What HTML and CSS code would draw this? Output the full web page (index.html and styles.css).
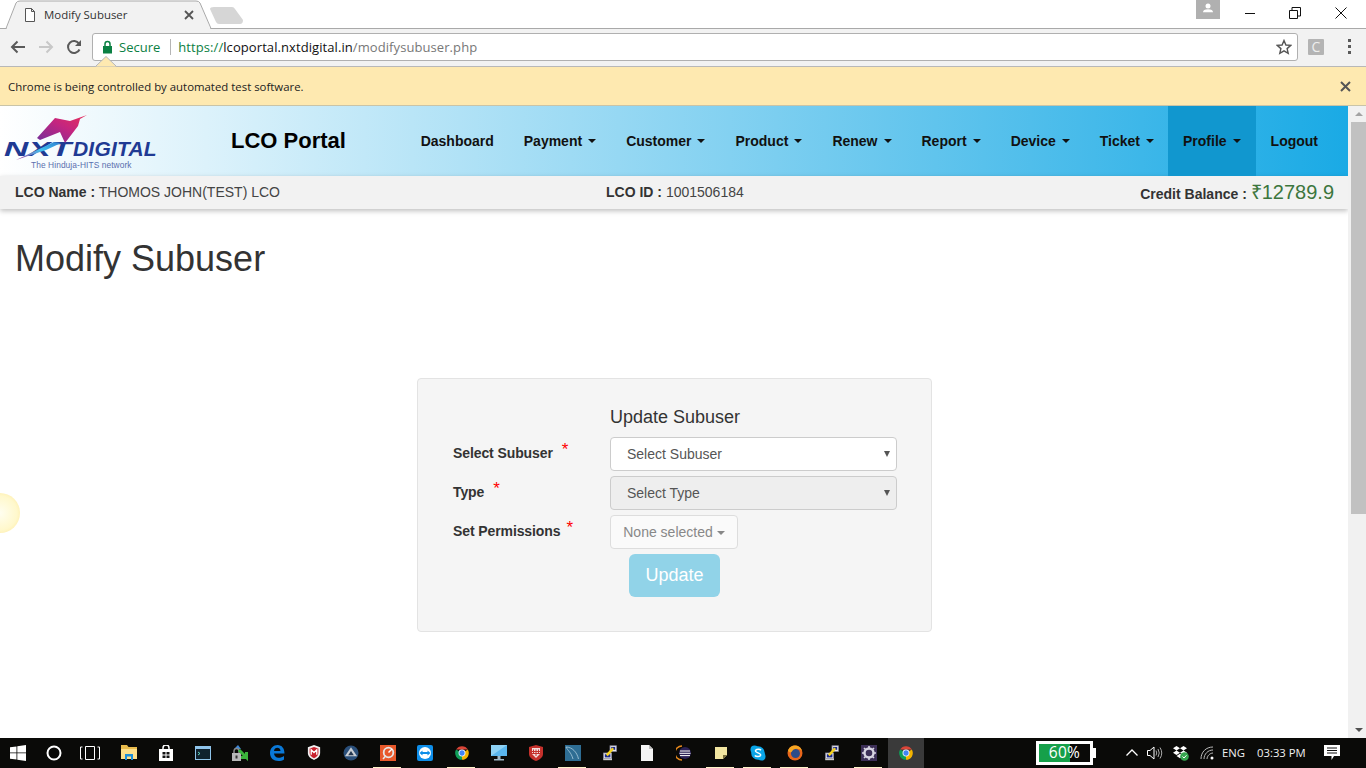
FILE: index.html
```html
<!DOCTYPE html>
<html lang="en">
<head>
<meta charset="utf-8">
<title>Modify Subuser</title>
<link rel="stylesheet" href="styles.css">
</head>
<body>
<svg class="defs" width="0" height="0" aria-hidden="true">
  <symbol id="chrome" viewBox="0 0 20 20">
    <path fill="#db4437" d="M2.6 5.75A8.5 8.5 0 0 1 17.36 5.75L10 5.75Z"/>
    <path fill="#f4b400" d="M17.36 5.75A8.5 8.5 0 0 1 10 18.5L10 10Z"/>
    <path fill="#0f9d58" d="M10 18.5A8.5 8.5 0 0 1 2.6 5.75L10 10Z"/>
    <circle cx="10" cy="10" r="4.3" fill="#fff"/>
    <circle cx="10" cy="10" r="3.3" fill="#4285f4"/>
  </symbol>
  <symbol id="putty" viewBox="0 0 20 20">
    <rect x="2" y="10" width="10" height="7" fill="#e8e8f0" stroke="#889" stroke-width="1"/>
    <rect x="3.5" y="11.5" width="7" height="4" fill="#1b2a8a"/>
    <rect x="1.5" y="17" width="11" height="2" fill="#ccc"/>
    <rect x="10" y="1" width="8" height="7" fill="#e8e8f0" stroke="#889"/>
    <rect x="11.5" y="2.500" width="5" height="3.500" fill="#1b2a8a"/>
    <path d="M6 13 14 4" stroke="#f6d21f" stroke-width="3"/>
  </symbol>
</svg>

<header class="tabstrip">
  <svg class="tabshape" width="250" height="30" viewBox="0 0 250 30" aria-hidden="true">
    <path d="M6 30 16 3Q17 1 20 1H196Q199 1 200 3L211 30Z" fill="#f2f2f2"/>
    <path d="M0 28.500H6L16 3Q17 1 20 1H196Q199 1 200 3L211 28.500" fill="none" stroke="#a9a9a9"/>
    <path d="M214 7H232Q234 7 235 9L243 20Q243 24 240 24H219Q217 24 216 22L210 9Q210 7 214 7Z" fill="#d6d6d6"/>
  </svg>
  <div class="tab">
    <svg class="tabicon" width="12" height="14" viewBox="0 0 12 14" aria-hidden="true"><path d="M1.5.5H7.5L10.5 3.5V13.5H1.5ZM7.5.5V3.5H10.5" fill="#fff" stroke="#555"/></svg>
    <span class="tabtitle">Modify Subuser</span>
    <svg class="tabclose" width="10" height="10" viewBox="0 0 10 10" aria-hidden="true"><path d="M1 1 9 9M9 1 1 9" stroke="#555" stroke-width="1.8"/></svg>
  </div>
  <div class="wincontrols">
    <div class="avatar"><svg width="12" height="10" viewBox="0 0 14 12" aria-hidden="true"><circle cx="7" cy="3.5" r="3" fill="#fff"/><path d="M1 11Q1 7.5 7 7.5T13 11Z" fill="#fff"/></svg></div>
    <div class="winbtn"><svg width="12" height="12" viewBox="0 0 12 12" aria-hidden="true"><path d="M2 6.500H12" stroke="#111"/></svg></div>
    <div class="winbtn"><svg width="12" height="12" viewBox="0 0 12 12" aria-hidden="true"><path d="M.5 3.500H8.500V11.500H.5ZM3 3.500V.5H11.500V9H8.500" fill="none" stroke="#111"/></svg></div>
    <div class="winbtn"><svg width="12" height="12" viewBox="0 0 12 12" aria-hidden="true"><path d="M.5.5 11.500 11.500M11.500.5 .5 11.500" stroke="#111"/></svg></div>
  </div>
</header>

<div class="toolbar">
  <svg class="navicon first" width="16" height="14" viewBox="0 0 16 14" aria-hidden="true"><path d="M15 7H2M7.500 1.500 2 7l5.500 5.500" fill="none" stroke="#5a5a5a" stroke-width="2"/></svg>
  <svg class="navicon" width="16" height="14" viewBox="0 0 16 14" aria-hidden="true"><path d="M1 7H14M8.500 1.500 14 7l-5.500 5.500" fill="none" stroke="#c8c8c8" stroke-width="2"/></svg>
  <svg class="navicon" width="16" height="16" viewBox="0 0 16 16" aria-hidden="true"><path d="M13.500 10.500A6 6 0 1 1 13 4.600" fill="none" stroke="#5a5a5a" stroke-width="2"/><path d="M15 1V7H9Z" fill="#5a5a5a"/></svg>
  <div class="omnibox">
    <svg class="lock" width="11" height="14" viewBox="0 0 11 14" aria-hidden="true"><path d="M3 6V4a2.500 2.500 0 0 1 5 0V6" fill="none" stroke="#0b8043" stroke-width="1.500"/><rect x="1" y="6" width="9" height="7.500" fill="#0b8043"/></svg>
    <span class="secure">Secure</span>
    <span class="omnisep"></span>
    <span class="url"><span class="scheme">https://</span>lcoportal.nxtdigital.in<span class="path">/modifysubuser.php</span></span>
    <svg class="star" width="16" height="16" viewBox="0 0 16 16" aria-hidden="true"><path d="M8 1.500 9.900 6 14.800 6.400 11.100 9.600 12.200 14.400 8 11.900 3.800 14.400 4.900 9.600 1.200 6.400 6.100 6Z" fill="none" stroke="#555" stroke-width="1.400"/></svg>
  </div>
  <span class="extension">C</span>
  <span class="menu"><i></i><i></i><i></i></span>
</div>

<div class="infobar">
  <svg class="notch" width="22" height="11" viewBox="0 0 22 11" aria-hidden="true"><path d="M1 10.500 11 .5 21 10.500Z" fill="#fee9b0"/><path d="M1 10 11 .5 21 10" fill="none" stroke="#b5b5b5"/></svg>
  <span class="infotext">Chrome is being controlled by automated test software.</span>
  <svg width="11" height="11" viewBox="0 0 11 11" aria-hidden="true"><path d="M1 1 10 10M10 1 1 10" stroke="#555" stroke-width="2"/></svg>
</div>

<div class="viewport">
  <main class="page">
    <nav class="navbar">
      <div class="brand">
        <span class="nxt">NXT</span><span class="digital">DIGITAL</span>
        <span class="tagline">The Hinduja-HITS network</span>
        <svg class="swoosh" width="90" height="62" viewBox="0 0 90 62" aria-hidden="true">
          <defs>
            <linearGradient id="wing" x1="0" y1="1" x2="1" y2="0"><stop offset="0" stop-color="#6f2f9c"/><stop offset=".55" stop-color="#c32580"/><stop offset="1" stop-color="#e8305a"/></linearGradient>
            <linearGradient id="tail" x1="0" y1="1" x2="1" y2="0"><stop offset="0" stop-color="#b03a9a"/><stop offset=".55" stop-color="#3fc0ee"/><stop offset="1" stop-color="#2f7fd0"/></linearGradient>
          </defs>
          <path d="M33 26 51 6 66 9 83 3 76 7 74 14 61 31 56 20 36 28Z" fill="url(#wing)"/>
          <path d="M12 48 50 30 57 31 42 38Z" fill="url(#tail)"/>
        </svg>
      </div>
      <span class="portal">LCO Portal</span>
      <ul class="menu-list">
        <li class="item">Dashboard</li>
        <li class="item">Payment<b class="caret"></b></li>
        <li class="item">Customer<b class="caret"></b></li>
        <li class="item">Product<b class="caret"></b></li>
        <li class="item">Renew<b class="caret"></b></li>
        <li class="item">Report<b class="caret"></b></li>
        <li class="item">Device<b class="caret"></b></li>
        <li class="item tight">Ticket<b class="caret"></b></li>
        <li class="item active">Profile<b class="caret"></b></li>
        <li class="item">Logout</li>
      </ul>
    </nav>
    <div class="subbar">
      <span class="sub-name"><b>LCO Name :</b> THOMOS JOHN(TEST) LCO</span>
      <span class="sub-id"><b>LCO ID :</b> 1001506184</span>
      <span class="sub-credit"><b>Credit Balance :</b> <span class="amount">₹12789.9</span></span>
    </div>
    <h1 class="title">Modify Subuser</h1>
    <form class="panel">
      <h4 class="panel-title">Update Subuser</h4>
      <label class="field-label">Select Subuser<sup class="req">*</sup></label>
      <div class="select-wrap"><select class="control"><option>Select Subuser</option></select></div>
      <label class="field-label">Type<sup class="req">*</sup></label>
      <div class="select-wrap"><select class="control" disabled><option>Select Type</option></select></div>
      <label class="field-label">Set Permissions<sup class="req tight">*</sup></label>
      <div><button type="button" class="multi">None selected<b class="caret"></b></button></div>
      <div class="actions"><button type="button" class="update">Update</button></div>
    </form>
  </main>
  <aside class="scrollbar">
    <span class="arrow-up"></span>
    <span class="thumb"></span>
    <span class="arrow-down"></span>
  </aside>
  <span class="highlight"></span>
</div>

<footer class="taskbar">
  <div class="tb-item narrow"><svg width="16" height="16" viewBox="0 0 16 16" aria-hidden="true"><path fill="#fff" d="M0 2.300 6.500 1.400V7.500H0ZM7.300 1.300 16 0V7.500H7.300ZM0 8.300H6.500V14.600L0 13.700ZM7.300 8.300H16V16L7.300 14.700Z"/></svg></div>
  <div class="tb-item narrow"><svg width="16" height="16" viewBox="0 0 16 16" aria-hidden="true"><circle cx="8" cy="8" r="6.500" fill="none" stroke="#fff" stroke-width="2"/></svg></div>
  <div class="tb-item narrow"><svg width="20" height="14" viewBox="0 0 20 14" aria-hidden="true"><path d="M5.500.5H14.500V13.500H5.500ZM2.500 1H.5V13H2.500M17.500 1H19.500V13H17.500" fill="none" stroke="#fff"/></svg></div>
  <div class="tb-item folder"><svg width="16" height="15" viewBox="0 0 16 15" aria-hidden="true"><path d="M0 0H6L7.500 2H16V14H0Z" fill="#e8bb4c"/><path d="M0 4H16V14H0Z" fill="#fde08a"/><path d="M4 9H12V15H10V11.500H6V15H4Z" fill="#1e8fd8"/></svg></div>
  <div class="tb-item"><svg width="14" height="16" viewBox="0 0 14 16" aria-hidden="true"><path d="M0 4H14V16H0Z" fill="#fff"/><path d="M4 4V3A3 3 0 0 1 10 3V4" fill="none" stroke="#fff" stroke-width="1.500"/><path d="M3.500 7H6.500V9.500H3.500ZM7.500 7H10.500V9.500H7.500ZM3.500 10.500H6.500V13H3.500ZM7.500 10.500H10.500V13H7.500Z" fill="#111"/></svg></div>
  <div class="tb-item"><svg width="16" height="14" viewBox="0 0 16 14" aria-hidden="true"><rect width="16" height="14" fill="#8fc4ea"/><rect x="1" y="3" width="14" height="10" fill="#10222e"/><path d="M3 6 5 7.500 3 9" fill="none" stroke="#7fd" stroke-width=".8"/></svg></div>
  <div class="tb-item"><svg width="16" height="16" viewBox="0 0 16 16" aria-hidden="true"><path d="M2 4 6 0 9 4Z" fill="#3f87d6"/><rect x="0" y="8" width="9" height="8" fill="#b8b8b8"/><path d="M2 8V6A2.500 2.500 0 0 1 7 6V8" fill="none" stroke="#8a8a8a" stroke-width="1.500"/><rect x="3.500" y="10.500" width="2" height="3" fill="#333"/><path d="M7 5 14.500 12.500V7M14.500 12.500H9" fill="none" stroke="#3bb43b" stroke-width="3"/></svg></div>
  <div class="tb-item"><svg width="16" height="16" viewBox="0 0 16 16" aria-hidden="true"><path d="M1 8C1 3 4.500 0 8.500 0 13 0 15.500 3.500 15.500 8.500H5C5.300 11 7 12.800 9.500 12.800 11.500 12.800 13.500 12 15 11V14.500C13.500 15.500 11.500 16 9.500 16 4.500 16 1 13 1 8ZM5 6H11.500C11.300 4 10 2.800 8.300 2.800 6.600 2.800 5.300 4 5 6Z" fill="#0a78d6"/></svg></div>
  <div class="tb-item"><svg width="14" height="15" viewBox="0 0 16 17" aria-hidden="true"><path d="M1 2.500 8 0 15 2.500V9C15 13 12 15 8 17 4 15 1 13 1 9Z" fill="#f2f2f2"/><path d="M3 4 8 2.200 13 4V9C13 11.800 11 13.500 8 15 5 13.500 3 11.800 3 9Z" fill="#c8202c"/><path d="M4.800 11V5.500L8 8.500 11.200 5.500V11" fill="none" stroke="#fff" stroke-width="1.500"/></svg></div>
  <div class="tb-item"><svg width="16" height="16" viewBox="0 0 17 17" aria-hidden="true"><circle cx="8.500" cy="8.500" r="8" fill="#2a4f7a"/><path d="M8.500 2.500 15 12H2Z" fill="#c9ced4"/><path d="M8.500 6.500 11.500 11H5.500Z" fill="#23364f"/></svg></div>
  <div class="tb-item run"><svg width="16" height="16" viewBox="0 0 16 16" aria-hidden="true"><rect width="16" height="16" fill="#e8592b"/><circle cx="8.500" cy="7.500" r="4.800" fill="none" stroke="#e6e6e6" stroke-width="1.800"/><path d="M8.500 7.500 12 4" stroke="#fff" stroke-width="1.500"/><path d="M3 14 6 10.500" stroke="#e6e6e6" stroke-width="1.500"/></svg></div>
  <div class="tb-item"><svg width="16" height="16" viewBox="0 0 16 16" aria-hidden="true"><rect width="16" height="16" rx="2" fill="#0e8ee9"/><circle cx="8" cy="8" r="6" fill="#fff"/><path d="M2.500 8 5.500 5.500V7H10.500V5.500L13.500 8 10.500 10.500V9H5.500V10.500Z" fill="#0e8ee9"/></svg></div>
  <div class="tb-item run"><svg width="16" height="16" aria-hidden="true"><use href="#chrome"/></svg></div>
  <div class="tb-item"><svg width="16" height="16" viewBox="0 0 16 16" aria-hidden="true"><rect y="0" width="16" height="11" fill="#5ab6ee"/><path d="M0 0H16L0 11Z" fill="#8ed2f5"/><rect x="6.500" y="11" width="3" height="3" fill="#9fb8c8"/><rect x="3" y="14" width="10" height="1.500" fill="#9fb8c8"/></svg></div>
  <div class="tb-item"><svg width="14" height="16" viewBox="0 0 14 16" aria-hidden="true"><path d="M0 2 7 0 14 2V9C14 12 11 14.500 7 16 3 14.500 0 12 0 9Z" fill="#c5312c"/><path d="M3 3H11V9L7 13 3 9Z" fill="#f3dcdc"/><path d="M4.500 4.500V9M7 4.500V11M9.500 4.500V9M3 6.500H11M3 8.500H11" stroke="#c5312c"/></svg></div>
  <div class="tb-item run"><svg width="16" height="16" viewBox="0 0 16 16" aria-hidden="true"><rect width="16" height="16" fill="#2e6d93"/><path d="M1 2C7 2 12 7 13.500 14M1 2C3 6 6 7 8 14" fill="none" stroke="#9ec2d6" stroke-width=".9"/></svg></div>
  <div class="tb-item"><svg width="16" height="16" aria-hidden="true"><use href="#putty"/></svg></div>
  <div class="tb-item"><svg width="12" height="16" viewBox="0 0 12 16" aria-hidden="true"><path d="M0 0H8L12 4V16H0Z" fill="#f4f4f4"/><path d="M8 0V4H12Z" fill="#bcbcbc"/></svg></div>
  <div class="tb-item"><svg width="16" height="16" viewBox="0 0 16 16" aria-hidden="true"><path d="M6 1A7 7 0 0 0 6 15" fill="none" stroke="#e8891c" stroke-width="1.500"/><circle cx="9" cy="8" r="6" fill="#2c2255"/><path d="M4 6H14M3.500 8.300H14.500M4 10.600H14" stroke="#fff"/></svg></div>
  <div class="tb-item run"><svg width="12" height="12" viewBox="0 0 12 12" aria-hidden="true"><path d="M0 0H12V8L8 12H0Z" fill="#f2e5a0"/><path d="M12 8H8V12Z" fill="#7a6e3a"/></svg></div>
  <div class="tb-item run"><svg width="16" height="16" viewBox="0 0 16 16" aria-hidden="true"><circle cx="4.500" cy="4.500" r="4" fill="#0aa5e8"/><circle cx="11.500" cy="11.500" r="4" fill="#0aa5e8"/><circle cx="8" cy="8" r="6.800" fill="#0aa5e8"/><path d="M11 5.200C10 4 6 3.800 5.500 5.800 5 8 11 7.800 10.700 10.200 10.300 12 6 12 4.800 10.500" fill="none" stroke="#fff" stroke-width="1.500"/></svg></div>
  <div class="tb-item run"><svg width="16" height="16" viewBox="0 0 16 16" aria-hidden="true"><circle cx="8" cy="8" r="7.500" fill="#e8661b"/><circle cx="8.500" cy="8.500" r="4.500" fill="#2c4c8a"/><path d="M1 6C2 2 5 .5 8 .5 11 .5 14 2 15 6 13 3.500 9 3 6.500 4.500 5 6 5 7 3 7.500Z" fill="#f6a623"/></svg></div>
  <div class="tb-item"><svg width="16" height="16" aria-hidden="true"><use href="#putty"/></svg></div>
  <div class="tb-item run"><svg width="16" height="16" viewBox="0 0 16 16" aria-hidden="true"><rect width="16" height="16" fill="#3c2f57"/><circle cx="8" cy="8" r="4.500" fill="none" stroke="#d9d6e3" stroke-width="2.400"/><path d="M8 1V3.500M8 12.500V15M1 8H3.500M12.500 8H15M3 3 4.800 4.800M13 13 11.200 11.200M3 13 4.800 11.200M13 3 11.200 4.800" stroke="#d9d6e3" stroke-width="1.600"/></svg></div>
  <div class="tb-item active-app"><svg width="16" height="16" aria-hidden="true"><use href="#chrome"/></svg></div>
  <div class="battery"><span class="battery-fill"></span><span class="battery-text">60%</span></div>
  <span class="battery-tip"></span>
  <div class="tray">
    <svg width="12" height="7" viewBox="0 0 12 7" aria-hidden="true"><path d="M.5 6.500 6 1l5.500 5.500" fill="none" stroke="#fff" stroke-width="1.300"/></svg>
    <svg class="speaker" width="16" height="14" viewBox="0 0 16 14" aria-hidden="true"><path d="M.5 4.500H3L7 1V13L3 9.500H.5Z" fill="none" stroke="#fff"/><path d="M9 4.500Q10.500 7 9 9.500M11 3Q13.500 7 11 11M13 1.500Q16.500 7 13 12.500" fill="none" stroke="#aaa"/></svg>
    <svg class="dropbox" width="16" height="16" viewBox="0 0 16 16" aria-hidden="true"><path d="M3.500 1 7 3.200 3.500 5.500 0 3.200ZM10.500 1 14 3.200 10.500 5.500 7 3.200ZM3.500 5.500 7 7.800 3.500 10 0 7.800ZM10.500 5.500 14 7.800 10.500 10 7 7.800ZM3.500 11 7 8.800 10.500 11 7 13.200Z" fill="#fff"/><circle cx="11.500" cy="11.500" r="4.300" fill="#36a64f"/><path d="M9.500 11.500 11 13 13.500 10.300" fill="none" stroke="#fff"/></svg>
    <svg class="wifi" width="15" height="14" viewBox="0 0 15 14" aria-hidden="true"><path d="M1 13C1 6 6 1 13 1M4 13C4 8 8 4 13 4M7 13C7 10 10 7 13 7" fill="none" stroke="#bbb"/><circle cx="12" cy="12" r="1.500" fill="#fff"/></svg>
    <span class="lang">ENG</span>
    <span class="clock">03:33 PM</span>
    <svg class="notify" width="16" height="15" viewBox="0 0 16 15" aria-hidden="true"><path d="M0 0H16V11H10L7.500 15 7.500 11H0Z" fill="#fff"/><path d="M3 3H13M3 5.500H13M3 8H13" stroke="#111"/></svg>
  </div>
</footer>
</body>
</html>
```
FILE: styles.css
```css
* { box-sizing: border-box; }
html, body { margin: 0; padding: 0; }
body {
  width: 1366px; height: 768px; overflow: hidden;
  display: flex; flex-direction: column;
  font-family: "Liberation Sans", Arial, sans-serif;
  font-size: 14px; color: #333; background: #fff;
  position: relative;
}
.defs { position: absolute; }

/* browser tab strip */
.tabstrip { height: 29px; position: relative; display: flex; justify-content: space-between; background: #fff; flex: none; border-bottom: 1px solid #a9a9a9; }
.tabshape { position: absolute; left: 0; top: 0; }
.tab { position: relative; display: flex; align-items: center; width: 194px; height: 29px; padding-left: 24px; }
.tabicon { flex: none; margin-right: 8px; }
.tabtitle { font: 11.45px "Open Sans", sans-serif; color: #333; flex: 1; }
.tabclose { flex: none; }
.wincontrols { display: flex; position: relative; align-items: flex-start; padding-right: 2px; }
.avatar { width: 24px; height: 19px; background: #b0b0b0; display: flex; justify-content: center; align-items: flex-start; padding-top: 3px; margin-right: 6px; }
.winbtn { width: 46px; height: 26px; display: flex; align-items: center; justify-content: center; }

/* toolbar */
.toolbar { height: 37px; background: #f2f2f2; display: flex; align-items: center; flex: none; position: relative; padding-bottom: 2px; }
.navicon { margin-right: 12px; flex: none; }
.navicon.first { margin-left: 10px; }
.omnibox { width: 1206px; height: 28px; margin-left: -2px; background: #fff; border: 1px solid #b0b0b0; border-radius: 3px; display: flex; align-items: center; padding-left: 9px; padding-right: 5px; flex: none; }
.lock { flex: none; margin-right: 6px; }
.secure { font: 13px "Open Sans", sans-serif; color: #0b8043; }
.omnisep { width: 1px; height: 16px; background: #b5b5b5; margin: 0 7px 0 10px; }
.url { font: 13px "Open Sans", sans-serif; color: #111; flex: 1; letter-spacing: .08px; }
.scheme { color: #0b8043; }
.path { color: #777; }
.extension { width: 16px; height: 16px; margin-left: 10px; background: #b4b4b4; color: #eee; border-radius: 1px; font: 14px "Open Sans", sans-serif; text-align: center; line-height: 16px; flex: none; }
.menu { display: flex; flex-direction: column; gap: 3px; margin-left: 24px; }
.menu i { width: 3px; height: 3px; background: #5a5a5a; display: block; }

/* infobar */
.infobar { height: 40px; background: #fee9b0; border-top: 1px solid #b8b8b8; border-bottom: 1px solid #c9c4a8; display: flex; justify-content: space-between; align-items: center; padding: 0 15px 0 8px; flex: none; position: relative; }
.notch { position: absolute; left: 95px; top: -11px; }
.infotext { font: 11.4px "Open Sans", sans-serif; color: #222; }

/* page */
.viewport { flex: 1; display: flex; min-height: 0; position: relative; overflow: hidden; }
.page { flex: 1; min-width: 0; }
.navbar { height: 70px; display: flex; align-items: center; background: linear-gradient(90deg, #fff 0%, #1aaae5 100%); padding-right: 15px; }
.brand { position: relative; width: 231px; height: 70px; flex: none; }
.swoosh { position: absolute; left: 4px; top: 6px; }
.nxt { position: absolute; left: 4px; top: 31px; font: italic bold 21px "Liberation Sans", sans-serif; color: #1f3a93; transform: scaleX(1.6); transform-origin: left; }
.digital { position: absolute; left: 73px; top: 31px; font: italic bold 21px "Liberation Sans", sans-serif; color: #1f3a93; letter-spacing: .2px; }
.tagline { position: absolute; left: 31px; top: 54px; font: 8.4px "Liberation Sans", sans-serif; color: #5a6fae; letter-spacing: .08px; }
.portal { font-size: 22px; font-weight: bold; color: #000; flex: none; }
.menu-list { list-style: none; margin: 0 0 0 auto; padding: 0; display: flex; height: 70px; }
.item { display: flex; align-items: center; padding: 0 15px; font-weight: bold; color: #111; }
.item.tight { padding-right: 14px; }
.item.active { background: #1197cf; }
.caret { display: inline-block; width: 0; height: 0; margin-left: 6px; border-top: 4px solid #111; border-left: 4px solid transparent; border-right: 4px solid transparent; }
.subbar { height: 33px; background: #f2f2f2; color: #444; box-shadow: 0 2px 5px rgba(0,0,0,.25); display: flex; align-items: center; padding: 0 14px 2px 15px; }
.subbar b { color: #333; }
.sub-name { width: 591px; }
.sub-id { flex: 1; }
.amount { font-size: 20px; color: #3c763d; }
.title { font-size: 36px; font-weight: 500; color: #333; line-height: 40px; margin: 30px 0 99px 15px; }

/* form */
.panel { width: 515px; height: 254px; margin: 0 0 0 417px; background: #f5f5f5; border: 1px solid #e3e3e3; border-radius: 4px; padding: 24px 35px 0; display: grid; grid-template-columns: 157px 287px; grid-auto-rows: min-content; row-gap: 5px; align-content: start; }
.panel-title { grid-column: 2; margin: 0 0 1px; font-size: 18px; font-weight: 500; line-height: 28px; color: #333; }
.field-label { font-weight: bold; color: #333; height: 34px; display: flex; align-items: center; padding-bottom: 2px; letter-spacing: -.1px; }
.req { color: red; font-weight: normal; font-size: 17px; margin-left: 9px; position: relative; top: -3px; }
.req.tight { margin-left: 6px; }
.select-wrap { position: relative; height: 34px; }
.select-wrap::after { content: ""; position: absolute; right: 7px; top: 14px; width: 0; height: 0; border-top: 6px solid #555; border-left: 3px solid transparent; border-right: 3px solid transparent; pointer-events: none; }
.control { appearance: none; display: block; width: 287px; height: 34px; font: 14px "Liberation Sans", sans-serif; color: #555; background: #fff; border: 1px solid #ccc; border-radius: 4px; padding: 0 16px; }
.control:disabled { background: #eee; opacity: 1; color: #555; }
.multi { height: 34px; width: 128px; padding: 0; font: 14px "Liberation Sans", sans-serif; color: #888; background: #fafafa; border: 1px solid #ddd; border-radius: 4px; }
.multi .caret { border-top-color: #888; margin-left: 4px; vertical-align: middle; }
.actions { grid-column: 2; }
.update { margin-left: 19px; width: 91px; height: 43px; font: 18px "Liberation Sans", sans-serif; color: #fff; background: #91d3e8; border: 0; border-radius: 6px; }

/* scrollbar */
.scrollbar { width: 18px; background: #f1f1f1; display: flex; flex-direction: column; align-items: center; flex: none; padding-left: 3px; }
.arrow-up, .arrow-down { width: 0; height: 0; border-left: 4px solid transparent; border-right: 4px solid transparent; flex: none; }
.arrow-up { border-bottom: 4px solid #a3a3a3; margin: 6px 0 6px; }
.thumb { width: 15px; height: 392px; background: #c1c1c1; flex: none; }
.arrow-down { border-top: 4px solid #505050; margin-top: auto; margin-bottom: 6px; }
.highlight { position: absolute; left: -20px; top: 387px; width: 40px; height: 40px; border-radius: 50%; background: radial-gradient(circle, #fffef0 0%, #fff8cc 60%, #fde28d 100%); }

/* taskbar */
.taskbar { height: 30px; background: #0a0a08; display: flex; align-items: center; flex: none; position: relative; padding-bottom: 1px; }
.tb-item { width: 37px; height: 30px; display: flex; align-items: center; justify-content: center; flex: none; position: relative; }
.tb-item.narrow { width: 36px; }
.tb-item.folder { margin-left: 2px; }
.tb-item.run::after { content: ""; position: absolute; left: 4px; right: 5px; bottom: -1px; height: 2px; background: #fdf3c8; }
.active-app { background: #3a3a3a; width: 36px; margin-left: 1px; }
.battery { width: 57px; height: 24px; margin-left: 112px; border: 3px solid #fff; background: #0a0a08; position: relative; display: flex; align-items: center; justify-content: center; flex: none; padding-bottom: 1px; }
.battery-fill { position: absolute; left: 0; top: 0; bottom: 0; width: 31px; background: #16a04a; }
.battery-text { position: relative; color: #fff; font: 15.5px "Open Sans", sans-serif; line-height: 16px; letter-spacing: .3px; }
.battery-tip { width: 3px; height: 10px; background: #fff; flex: none; }
.tray { display: flex; align-items: center; margin-left: 30px; color: #f0f0f0; font: 11.3px "Open Sans", sans-serif; }
.speaker { margin-left: 9px; }
.dropbox { margin-left: 10px; }
.wifi { margin-left: 11px; }
.lang { margin-left: 7px; }
.clock { margin-left: 12px; }
.notify { margin-left: 18px; }
```
